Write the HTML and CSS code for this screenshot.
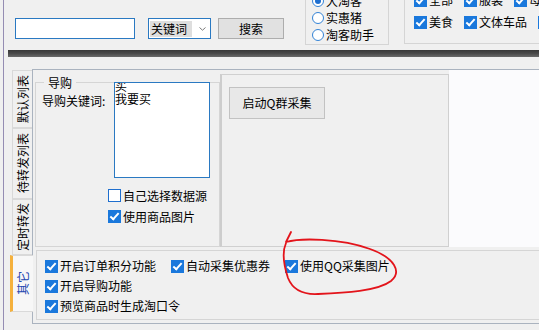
FILE: index.html
```html
<!DOCTYPE html>
<html lang="zh-CN">
<head>
    <meta charset="UTF-8">
    <title>淘客助手</title>
    <link rel="stylesheet" href="styles.css">
</head>
<body>
    <div class="app">
        <!-- Search bar -->
        <div class="toolbar">
            <div class="search-input"></div>
            <div class="combo">
                <span class="combo-text">关键词</span>
                <svg class="combo-arrow" width="7" height="4" viewBox="0 0 7 4"><path d="M0.5 0.5 3.5 3.2 6.5 0.5" fill="none" stroke="#7a7a7a" stroke-width="1"/></svg>
            </div>
            <button class="btn search-btn">搜索</button>

            <div class="group radio-group">
                <div class="radio"><span class="radio-mark on"></span>大淘客</div>
                <div class="radio"><span class="radio-mark"></span>实惠猪</div>
                <div class="radio"><span class="radio-mark"></span>淘客助手</div>
            </div>

            <div class="group cat-group">
                <div class="cb-row">
                    <div class="cb"><span class="box on"></span>全部</div>
                    <div class="cb"><span class="box on"></span>服装</div>
                    <div class="cb"><span class="box on"></span>母婴</div>
                </div>
                <div class="cb-row">
                    <div class="cb"><span class="box on"></span>美食</div>
                    <div class="cb"><span class="box on"></span>文体车品</div>
                    <div class="cb"><span class="box on"></span>数码家电</div>
                </div>
            </div>
        </div>

        <div class="splitter"></div>

        <!-- Tab control -->
        <div class="tabctl">
            <div class="tab-strip">
                <div class="tab tab-default"><span class="tab-label">默认列表</span></div>
                <div class="tab tab-pending"><span class="tab-label">待转发列表</span></div>
                <div class="tab tab-timed"><span class="tab-label">定时转发</span></div>
                <div class="tab active"><span class="tab-label">其它</span></div>
            </div>

            <div class="tab-page">
                <div class="page-top">
                    <div class="guide">
                        <span class="gb-title">导购</span>
                        <div class="guide-row">
                            <span class="guide-label">导购关键词:</span>
                            <div class="keywords">
                                <div class="keywords-text">买<br>我要买</div>
                            </div>
                        </div>
                        <div class="guide-checks">
                            <div class="check-row"><span class="box"></span>自己选择数据源</div>
                            <div class="check-row"><span class="box on"></span>使用商品图片</div>
                        </div>
                    </div>

                    <div class="qq-panel">
                        <button class="btn qq-btn">启动Q群采集</button>
                    </div>

                    <div class="blank"></div>
                </div>

                <div class="options">
                    <div class="opt-row">
                        <div class="opt"><span class="box on"></span>开启订单积分功能</div>
                        <div class="opt"><span class="box on"></span>自动采集优惠券</div>
                        <div class="opt"><span class="box on"></span>使用QQ采集图片</div>
                    </div>
                    <div class="opt-row">
                        <div class="opt"><span class="box on"></span>开启导购功能</div>
                    </div>
                    <div class="opt-row">
                        <div class="opt"><span class="box on"></span>预览商品时生成淘口令</div>
                    </div>
                </div>
            </div>
        </div>
    </div>

    <!-- hand-drawn mark around the QQ option -->
    <svg class="annot" width="539" height="330" viewBox="0 0 539 330">
        <path d="M291 232 Q288 238 286 242 C300 238 340 238 370 249 C395 258 402 272 391 281 C378 291 345 293 318 294 C300 295 292 288 288 278 C284 266 282 252 286 243"
              fill="none" stroke="#e3141b" stroke-width="1.8" stroke-linecap="round" stroke-linejoin="round"/>
    </svg>
</body>
</html>
```

FILE: styles.css
```css
body {
    margin: 0;
    width: 539px;
    height: 330px;
    overflow: hidden;
    background: #f0f0f0;
    color: #000;
    font-family: "Noto Sans CJK SC", "Microsoft YaHei", sans-serif;
    font-size: 12px;
    line-height: 16px;
}

.app {
    margin-left: 3px;
    border-left: 1px solid #958db3;
    height: 330px;
    overflow: hidden;
}

/* top search bar */
.toolbar {
    display: flex;
    align-items: flex-start;
    height: 50px;
    padding-left: 11px;
}

.toolbar > * {
    flex: none;
}

.search-input {
    width: 120px;
    height: 21px;
    margin-top: 18px;
    box-sizing: border-box;
    border: 1px solid #2a79c2;
    background: #fff;
}

.combo {
    display: flex;
    align-items: center;
    width: 63px;
    height: 21px;
    margin: 18px 0 0 13px;
    padding-left: 1px;
    box-sizing: border-box;
    border: 1px solid #2a79c2;
    background: #fff;
}

.combo-text {
    height: 16px;
    padding: 0 5px 0 1px;
    background: #dedede;
}

.combo-arrow {
    margin-left: 7px;
}

.btn {
    box-sizing: border-box;
    padding: 0;
    border: 1px solid #adadad;
    background: #e1e1e1;
    color: #000;
    font: inherit;
}

.search-btn {
    width: 66px;
    height: 21px;
    margin: 18px 0 0 7px;
}

.group {
    box-sizing: border-box;
    border: 1px solid #d5d5d5;
    margin-top: -12px;
}

.radio-group {
    width: 84px;
    height: 57px;
    margin-left: 21px;
    padding: 3px 0 0 6px;
}

.radio {
    display: flex;
    align-items: center;
    gap: 2px;
    height: 17px;
}

.radio-mark {
    display: flex;
    align-items: center;
    justify-content: center;
    width: 12px;
    height: 12px;
    box-sizing: border-box;
    border: 1px solid #3383d6;
    border-radius: 50%;
    background: #fff;
}

.radio-mark.on::after {
    content: "";
    width: 6px;
    height: 6px;
    border-radius: 50%;
    background: #1e6fd0;
}

.cat-group {
    width: 220px;
    height: 56px;
    margin-left: 15px;
    padding-left: 9px;
}

.cb-row {
    display: flex;
    align-items: center;
    height: 22px;
}

.cb {
    display: flex;
    align-items: center;
    gap: 2px;
    margin-right: 11px;
    white-space: nowrap;
}

/* checkbox */
.box {
    display: flex;
    align-items: center;
    justify-content: center;
    flex: none;
    width: 13px;
    height: 13px;
    box-sizing: border-box;
    border: 1px solid #1f6fce;
    background: #fff;
}

.box.on {
    background: #1a78dc;
    border-color: #1a78dc;
}

.box.on::after {
    content: "";
    width: 7px;
    height: 3px;
    margin-top: -2px;
    border-left: 2px solid #fff;
    border-bottom: 2px solid #fff;
    transform: rotate(-48deg);
}

.splitter {
    height: 7px;
    margin-left: 4px;
    background: linear-gradient(#383838, #4a4a4a 50%, #6a6a6a);
}

/* vertical tab control */
.tabctl {
    display: flex;
    height: 255px;
    margin: 12px -10px 0 6px;
}

.tab-strip {
    display: flex;
    flex-direction: column;
    flex: none;
    width: 22px;
    padding-top: 1px;
}

.tab {
    display: flex;
    align-items: center;
    justify-content: center;
    margin-left: 2px;
    box-sizing: border-box;
    border: 1px solid #d9d9d9;
    border-right: none;
}

.tab-default { height: 58px; }
.tab-pending { height: 71px; }
.tab-timed { height: 56px; }

.tab.active {
    position: relative;
    z-index: 1;
    height: 57px;
    margin: 0 -1px 0 0;
    border-left: 3px solid #f5b13d;
    background: #f7f7f7;
    color: #2446b0;
}

.tab-label {
    writing-mode: vertical-rl;
    text-orientation: sideways;
    transform: rotate(180deg);
}

.tab-page {
    flex: 1;
    height: 255px;
    box-sizing: border-box;
    border: 1px solid #aab3bf;
}

.page-top {
    display: flex;
    height: 177px;
}

.guide {
    position: relative;
    flex: none;
    width: 185px;
    height: 165px;
    margin: 12px 0 0 2px;
    box-sizing: border-box;
    border: 1px solid #d5d5d5;
}

.gb-title {
    position: absolute;
    top: -8px;
    left: 8px;
    padding: 0 4px;
    background: #f0f0f0;
}

.guide-row {
    display: flex;
    margin-top: -1px;
    padding-left: 6px;
}

.guide-label {
    width: 72px;
    margin-top: 11px;
}

.keywords {
    width: 96px;
    height: 96px;
    box-sizing: border-box;
    border: 1px solid #2a79c2;
    background: #fff;
    overflow: hidden;
}

.keywords-text {
    margin-top: -4px;
    line-height: 13px;
}

.guide-checks {
    padding: 7px 0 0 72px;
}

.check-row {
    display: flex;
    align-items: center;
    gap: 2px;
    height: 21px;
}

.qq-panel {
    flex: none;
    width: 229px;
    height: 173px;
    margin-top: 4px;
    padding: 12px 0 0 7px;
    box-sizing: border-box;
    border: 1px solid #d0d0d0;
    border-left: 2px solid #cdcdcd;
}

.qq-btn {
    width: 96px;
    height: 32px;
    border-color: #c2c2c2;
    background: #e8e8e8;
}

.blank {
    flex: 1;
    background: #fbfbfd;
}

.options {
    height: 70px;
    margin: 3px 0 0 3px;
    padding: 5px 0 0 8px;
    box-sizing: border-box;
    border: 1px solid #d5d5d5;
}

.opt-row {
    display: flex;
    align-items: center;
    gap: 15px;
    height: 20px;
}

.opt {
    display: flex;
    align-items: center;
    gap: 2px;
    white-space: nowrap;
}

.annot {
    position: absolute;
    left: 0;
    top: 0;
    pointer-events: none;
}
```
